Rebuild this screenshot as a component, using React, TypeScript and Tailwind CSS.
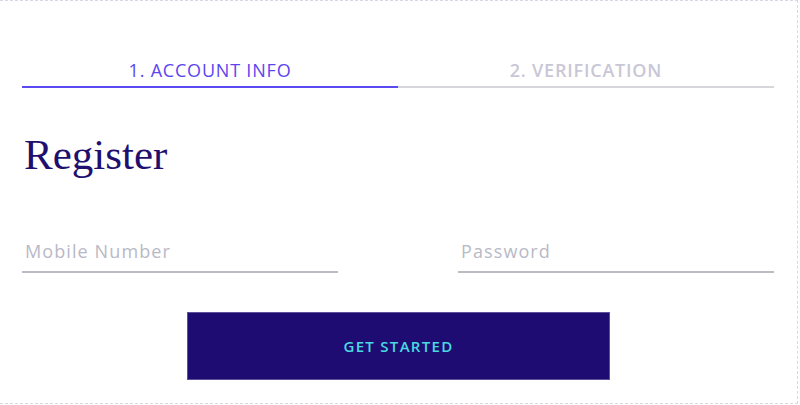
import { useState } from "react";

const sans = "font-['Open_Sans','Liberation_Sans',sans-serif]";

export default function App() {
    const [tab] = useState(0);
    const tabs = ["1. ACCOUNT INFO", "2. VERIFICATION"];

    return (
        <div className="w-[800px] h-[405px] bg-white overflow-hidden">
            <div className="w-[798px] h-[404px] border-t border-r border-b border-dashed border-[#d8d8e2] px-[22px] pt-[59px]">
                <div className="flex w-[752px]">
                    {tabs.map((t, i) => (
                        <div
                            key={t}
                            className={
                                i === tab
                                    ? `flex-1 text-center pb-[5px] border-b-2 border-[#5b4af2] text-[#5b45f0] text-[18px] leading-[21px] tracking-[0.8px] font-medium ${sans}`
                                    : `flex-1 text-center pb-[5px] border-b-2 border-[#d6d6dd] text-[#c9c7d6] text-[18px] leading-[21px] tracking-[0.8px] font-semibold ${sans}`
                            }
                        >
                            {t}
                        </div>
                    ))}
                </div>

                <h1 className="mt-[43px] text-[43px] leading-[48px] text-[#1f0f6e] font-['Liberation_Serif',serif] pl-[2px]">
                    Register
                </h1>

                <div className="mt-[58px] flex justify-between w-[752px]">
                    <input
                        placeholder="Mobile Number"
                        className={`w-[316px] h-[36px] pl-[3px] pb-[6px] border-b-2 border-[#b9bcc4] outline-none text-[18px] tracking-[1.1px] placeholder:text-[#b9b9c6] ${sans}`}
                    />
                    <input
                        type="password"
                        placeholder="Password"
                        className={`w-[316px] h-[36px] pl-[3px] pb-[6px] border-b-2 border-[#b9bcc4] outline-none text-[18px] tracking-[1.1px] placeholder:text-[#b9b9c6] ${sans}`}
                    />
                </div>

                <div className="mt-[39px] flex justify-center">
                    <button className={`w-[423px] h-[68px] bg-[#1f0c72] border border-[#5a5199] text-[#4ad9e2] text-[15px] tracking-[1.3px] font-semibold ${sans}`}>
                        GET STARTED
                    </button>
                </div>
            </div>
        </div>
    );
}
